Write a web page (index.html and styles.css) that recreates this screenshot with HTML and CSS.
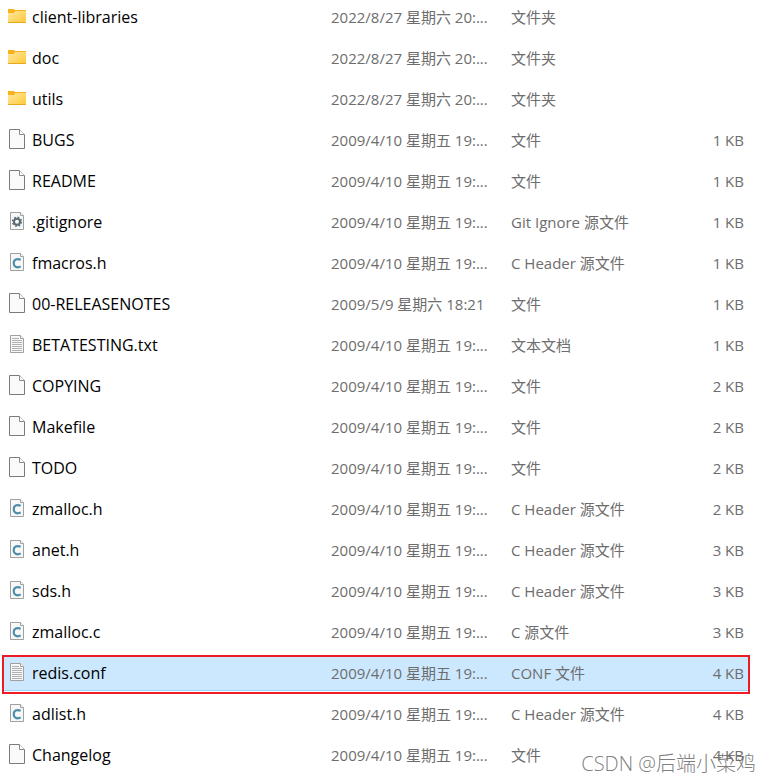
FILE: index.html
```html
<!DOCTYPE html>
<html lang="zh-CN">
<head>
    <meta charset="UTF-8">
    <meta name="viewport" content="width=device-width, initial-scale=1.0">
    <title>redis</title>
    <link rel="stylesheet" href="styles.css">
</head>
<body>
    <!-- 图标 -->
    <svg class="icon-defs" aria-hidden="true">
        <defs>
            <linearGradient id="folder-fill" x1="0" y1="0" x2="1" y2="1">
                <stop offset="0" stop-color="#ffe8a0"/>
                <stop offset="1" stop-color="#ffc937"/>
            </linearGradient>
        </defs>
        <symbol id="icon-folder" viewBox="0 0 20 23">
            <path d="M1 3h6l1 1h11v3H1z" fill="#f9b11e"/>
            <path d="M1 7h6l1-2h11v12H1z" fill="url(#folder-fill)"/>
            <path d="M1 16.500h18" stroke="#e9a820"/>
        </symbol>
        <symbol id="icon-file" viewBox="0 0 20 23">
            <path d="M2.500.5h10l5 5v14h-15z" fill="#fafafa" stroke="#7b7b7b"/>
            <path d="M12.500.5v5h5" fill="#fff" stroke="#8a8a8a"/>
        </symbol>
        <symbol id="icon-page" viewBox="0 0 20 23">
            <path d="M3.500 1.500h10l3 3v14h-13z" fill="#f7f7f7" stroke="#a0a0a0"/>
            <path d="M13.500 1.500v3h3" fill="#fff" stroke="#a0a0a0"/>
        </symbol>
        <symbol id="icon-text" viewBox="0 0 20 23">
            <use href="#icon-page" width="20" height="23"/>
            <path d="M5 4.500h7M5 6.500h10M5 8.500h10M5 10.500h10M5 12.500h10M5 14.500h10M5 16.500h10" stroke="#b0b0b0"/>
        </symbol>
        <symbol id="icon-c" viewBox="0 0 20 23">
            <use href="#icon-page" width="20" height="23"/>
            <path d="M13.700 7.800C9.700 6 6.700 7.800 6.700 11.200s3 5.200 7 3.400" fill="none" stroke="#4b8eac" stroke-width="2.200"/>
        </symbol>
        <symbol id="icon-gear" viewBox="0 0 20 23">
            <use href="#icon-page" width="20" height="23"/>
            <circle cx="10" cy="10.700" r="4.400" fill="none" stroke="#5b6b73" stroke-width="1.600" stroke-dasharray="1.730 1.730"/>
            <circle cx="10" cy="10.700" r="3" fill="none" stroke="#5b6b73" stroke-width="2"/>
        </symbol>
    </svg>

    <table class="file-list">
        <colgroup>
            <col>
            <col class="col-date">
            <col class="col-type">
            <col class="col-size">
        </colgroup>
        <tbody id="file-rows"></tbody>
    </table>

    <div class="watermark">CSDN @后端小菜鸡</div>

    <script>
        const files = [
            ['folder', 'client-libraries', '2022/8/27 星期六 20:...', '文件夹', ''],
            ['folder', 'doc', '2022/8/27 星期六 20:...', '文件夹', ''],
            ['folder', 'utils', '2022/8/27 星期六 20:...', '文件夹', ''],
            ['file', 'BUGS', '2009/4/10 星期五 19:...', '文件', '1 KB'],
            ['file', 'README', '2009/4/10 星期五 19:...', '文件', '1 KB'],
            ['gear', '.gitignore', '2009/4/10 星期五 19:...', 'Git Ignore 源文件', '1 KB'],
            ['c', 'fmacros.h', '2009/4/10 星期五 19:...', 'C Header 源文件', '1 KB'],
            ['file', '00-RELEASENOTES', '2009/5/9 星期六 18:21', '文件', '1 KB'],
            ['text', 'BETATESTING.txt', '2009/4/10 星期五 19:...', '文本文档', '1 KB'],
            ['file', 'COPYING', '2009/4/10 星期五 19:...', '文件', '2 KB'],
            ['file', 'Makefile', '2009/4/10 星期五 19:...', '文件', '2 KB'],
            ['file', 'TODO', '2009/4/10 星期五 19:...', '文件', '2 KB'],
            ['c', 'zmalloc.h', '2009/4/10 星期五 19:...', 'C Header 源文件', '2 KB'],
            ['c', 'anet.h', '2009/4/10 星期五 19:...', 'C Header 源文件', '3 KB'],
            ['c', 'sds.h', '2009/4/10 星期五 19:...', 'C Header 源文件', '3 KB'],
            ['c', 'zmalloc.c', '2009/4/10 星期五 19:...', 'C 源文件', '3 KB'],
            ['text', 'redis.conf', '2009/4/10 星期五 19:...', 'CONF 文件', '4 KB'],
            ['c', 'adlist.h', '2009/4/10 星期五 19:...', 'C Header 源文件', '4 KB'],
            ['file', 'Changelog', '2009/4/10 星期五 19:...', '文件', '4 KB']
        ];
        const selected = 'redis.conf';
        const rows = document.getElementById('file-rows');

        files.forEach(([icon, name, ...cells]) => {
            const row = rows.insertRow();
            if (name === selected) row.className = 'selected';

            const nameCell = row.insertCell();
            nameCell.className = 'name';
            nameCell.innerHTML = '<div class="file"><svg class="icon" aria-hidden="true"><use href="#icon-' + icon + '"/></svg><span></span></div>';
            nameCell.querySelector('span').textContent = name;

            cells.forEach(text => {
                row.insertCell().textContent = text;
            });
            row.lastElementChild.className = 'size';
        });
    </script>
</body>
</html>
```
FILE: styles.css
```css
body {
    margin: 0;
    background: #fff;
    font-family: "Open Sans", "Noto Sans CJK SC", sans-serif;
    font-size: 15px;
    line-height: 35px;
    position: relative;
}
.icon-defs {
    position: absolute;
    width: 0;
    height: 0;
}
.file-list {
    width: calc(100% - 26px);
    margin: 0 0 0 3px;
    border-collapse: separate;
    border-spacing: 0;
    table-layout: fixed;
}
.col-date {
    width: 180px;
}
.col-type {
    width: 160px;
}
.col-size {
    width: 77px;
}
td {
    height: 35px;
    padding: 0;
    border-bottom: 6px solid #fff;
    color: #6d6d6d;
    white-space: nowrap;
}
.name {
    color: #000;
    font-size: 16px;
}
.file {
    display: flex;
    align-items: center;
    gap: 5px;
    padding-left: 4px;
}
.icon {
    width: 20px;
    height: 23px;
}
.size {
    text-align: right;
    padding-right: 4px;
}
.selected {
    position: relative;
}
.selected td {
    background: #cce8ff;
    box-shadow: inset 0 -1px #99d1ff;
}
/* 选中行的红色边框 */
.selected .name::after {
    content: "";
    position: absolute;
    inset: -1px -2px 3px -1px;
    border: 2px solid #ed1c24;
}
.watermark {
    position: absolute;
    right: 15px;
    bottom: 0;
    color: rgba(110, 110, 110, 0.9);
    font-size: 20px;
    font-weight: 300;
    line-height: 30px;
}
```
